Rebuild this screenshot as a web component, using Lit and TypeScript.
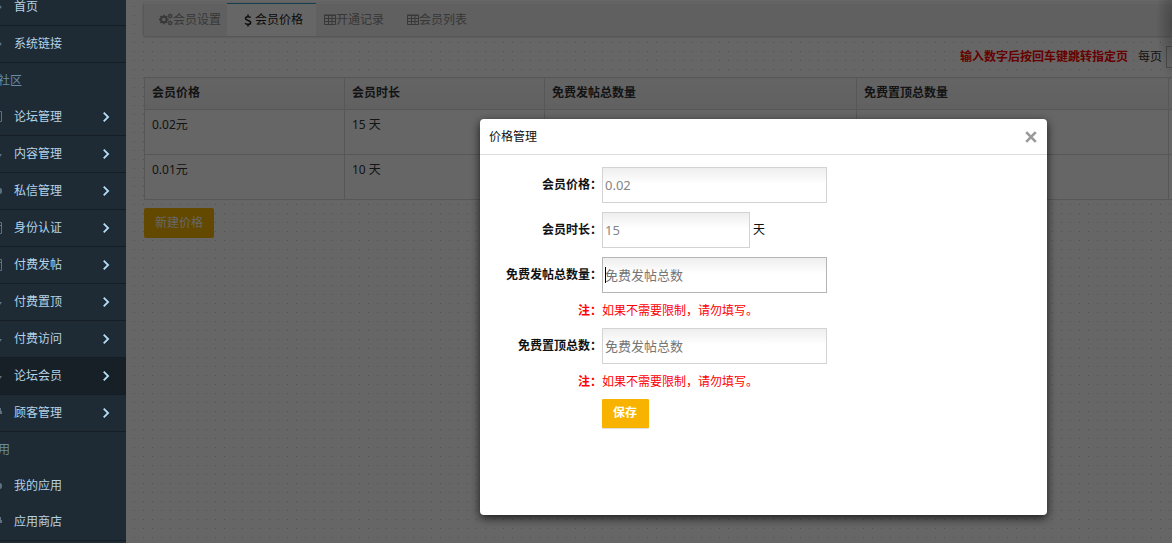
import { LitElement, html, css, svg, nothing } from "lit";
import { customElement, state } from "lit/decorators.js";

const chevron = html`<svg class="chevron" viewBox="0 0 8 12" aria-hidden="true">
  <path d="M1.700 1.700 6.100 6 1.700 10.300" fill="none" stroke="currentColor" stroke-width="1.800" />
</svg>`;

const teeth = (cx: number, cy: number, inner: number, outer: number, count: number, w: number) =>
  Array.from({ length: count }, (_, i) => svg`<rect x=${cx - w / 2} y=${cy - outer} width=${w} height=${outer - inner}
    transform=${`rotate(${(360 / count) * i} ${cx} ${cy})`} />`);

const cogs = html`<svg class="tab-icon" viewBox="0 0 14 13" aria-hidden="true" fill="currentColor">
  <circle cx="4.8" cy="6.5" r="2.8" fill="none" stroke="currentColor" stroke-width="2" />
  ${teeth(4.8, 6.5, 3.2, 4.8, 8, 1.8)}
  <circle cx="11.2" cy="3" r="1.4" fill="none" stroke="currentColor" stroke-width="1.1" />
  ${teeth(11.2, 3, 1.6, 2.5, 6, 1)}
  <circle cx="11.2" cy="10" r="1.4" fill="none" stroke="currentColor" stroke-width="1.1" />
  ${teeth(11.2, 10, 1.6, 2.5, 6, 1)}
</svg>`;

const dollar = html`<svg class="tab-icon dollar" viewBox="0 0 8 13" aria-hidden="true" fill="none" stroke="currentColor" stroke-width="1.5">
  <path d="M4 .5v2M4 10.500v2M6.700 3.500C5.500 2.600 1.500 2 1.500 4.500c0 2.500 5.200 1.300 5.200 4 0 2.500-4.200 2.200-5.600.8" />
</svg>`;

const grid = html`<svg class="tab-icon grid" viewBox="0 0 12 11" aria-hidden="true" fill="none" stroke="currentColor">
  <path d="M.5 1.500h11v9H.5zM0 1h12M.5 4.500h11M.5 7.500h11M4.500 1.500v9M8 1.500v9" />
</svg>`;

const edge: Record<string, unknown> = {
  dot: svg`<circle cx="0" cy="6" r="1.5" />`,
  box: svg`<path d="M0 .5h1.500v10H0" fill="none" stroke="currentColor" />`,
  card: svg`<path d="M0 .5h1.500v11H0M0 3.500h2" fill="none" stroke="currentColor" />`,
  arrow: svg`<path d="M0 6h2L0 9z" />`,
  bubble: svg`<path d="M0 3q2 0 2 3T0 9z" />`,
  user: svg`<path d="M0 1h1v3h1v3H0z" />`,
};

interface Entry {
  text: string;
  icon?: string;
  kind?: "plain" | "open" | "heading" | "bare";
  active?: boolean;
}

const menu: Entry[] = [
  { text: "首页", icon: "dot", kind: "plain" },
  { text: "系统链接", icon: "dot", kind: "plain" },
  { text: "社区", kind: "heading" },
  { text: "论坛管理", icon: "box", kind: "open" },
  { text: "内容管理", icon: "arrow", kind: "open" },
  { text: "私信管理", icon: "bubble", kind: "open" },
  { text: "身份认证", icon: "card", kind: "open" },
  { text: "付费发帖", icon: "card", kind: "open" },
  { text: "付费置顶", icon: "arrow", kind: "open" },
  { text: "付费访问", icon: "arrow", kind: "open" },
  { text: "论坛会员", icon: "arrow", kind: "open", active: true },
  { text: "顾客管理", icon: "user", kind: "open" },
  { text: "应用", kind: "heading" },
  { text: "我的应用", icon: "bubble", kind: "bare" },
  { text: "应用商店", icon: "user", kind: "plain" },
];

const base = css`
  :host {
    font: 12px/18px "Noto Sans", "Noto Sans CJK SC", sans-serif;
  }
  * {
    box-sizing: border-box;
  }
  a {
    color: inherit;
    text-decoration: none;
  }
  button,
  input,
  select {
    font: inherit;
    margin: 0;
  }
`;

@customElement("side-menu")
class SideMenu extends LitElement {
  static styles = [
    base,
    css`
      :host {
        display: block;
        overflow: hidden;
        background: #1e2b35;
        color: #b4d3e6;
      }
      .list {
        margin: -11px 0 0;
        padding: 0;
        list-style: none;
      }
      .link {
        display: flex;
        align-items: center;
        height: 37px;
        padding-right: 16px;
        border-bottom: 1px solid #151e25;
      }
      .bare {
        height: 36px;
        border-bottom: 0;
      }
      .active {
        background: #172027;
      }
      .heading {
        display: flex;
        align-items: center;
        justify-content: flex-end;
        width: 22px;
        height: 36px;
        white-space: nowrap;
        color: #668da3;
      }
      .short {
        width: 10px;
      }
      .edge {
        flex: none;
        width: 14px;
        height: 12px;
        color: #5d717e;
        fill: currentColor;
      }
      .label {
        flex: 1;
        white-space: nowrap;
      }
      .chevron {
        width: 8px;
        height: 12px;
        color: #b4dcf8;
      }
    `,
  ];

  render() {
    return html`<nav aria-label="主菜单">
      <ul class="list">
        ${menu.map((m) =>
          m.kind === "heading"
            ? html`<li class="heading ${m.text === "应用" ? "short" : ""}">${m.text}</li>`
            : html`<li>
                <a class="link ${m.kind} ${m.active ? "active" : ""}" href="#">
                  <svg class="edge" viewBox="0 0 14 12" aria-hidden="true">${edge[m.icon!]}</svg>
                  <span class="label">${m.text}</span>
                  ${m.kind === "open" ? chevron : nothing}
                </a>
              </li>`
        )}
      </ul>
    </nav>`;
  }
}

@customElement("price-page")
class PricePage extends LitElement {
  static styles = [
    base,
    css`
      :host {
        display: block;
        overflow: hidden;
        padding: 3px 0 0 18px;
        color: #333;
        background-color: #ccc;
        background-image: linear-gradient(90deg, transparent 1px, #fff 1px), linear-gradient(transparent 1px, #fff 1px);
        background-position: 8px 6px;
        background-size: 9px 9px;
      }
      .tabs {
        display: flex;
        align-items: flex-end;
        height: 33px;
        background: linear-gradient(#fff 0 1px, #f0f0f0 1px);
        box-shadow: 0 1px 2px #ccc, -1px 0 2px #ddd;
      }
      .tab {
        display: flex;
        align-items: center;
        height: 33px;
        padding: 0 15px 0 8px;
        color: #8c8c8c;
      }
      .first {
        padding: 0 6px 0 15px;
      }
      .current {
        padding: 0 13px 0 17px;
        background: #fff;
        border-top: 1px solid #2ea1c9;
        color: #222;
      }
      .tab-icon {
        width: 14px;
        height: 13px;
      }
      .dollar {
        width: 8px;
        margin-right: 3px;
      }
      .grid {
        width: 12px;
        height: 11px;
      }
      .pager {
        display: flex;
        justify-content: flex-end;
        align-items: center;
        height: 22px;
        margin: 10px 0 9px;
        gap: 10px;
        white-space: nowrap;
      }
      .hint {
        color: #f00;
        font-weight: bold;
      }
      .size {
        display: flex;
        align-items: center;
        gap: 4px;
        width: 34px;
      }
      .count {
        flex: none;
        width: 48px;
        height: 22px;
        border: 1px solid #bbb;
        background: #fff;
      }
      .prices {
        table-layout: fixed;
        width: calc(100% + 100px);
        border-collapse: collapse;
        background: #fff;
      }
      .narrow {
        width: 200px;
      }
      .wide {
        width: 312px;
      }
      th,
      td {
        padding: 6px 7px;
        border: 1px solid #d9d9d9;
        text-align: left;
        vertical-align: top;
      }
      th {
        height: 32px;
        background: linear-gradient(#fafafa, #f2f2f2);
      }
      td {
        height: 45px;
      }
      .create {
        height: 30px;
        margin-top: 8px;
        padding: 0 11px;
        border: 0;
        border-radius: 2px;
        background: #f8b300;
        color: #fff;
      }
    `,
  ];

  render() {
    return html`
      <nav class="tabs" aria-label="会员">
        <a class="tab first" href="#">${cogs}会员设置</a>
        <a class="tab current" href="#" aria-current="page">${dollar}会员价格</a>
        <a class="tab" href="#">${grid}开通记录</a>
        <a class="tab" href="#">${grid}会员列表</a>
      </nav>
      <div class="pager">
        <span class="hint">输入数字后按回车键跳转指定页</span>
        <label class="size">每页 <select class="count"><option></option></select></label>
      </div>
      <table class="prices">
        <colgroup>
          <col class="narrow" /><col class="narrow" /><col class="wide" /><col class="wide" /><col />
        </colgroup>
        <thead>
          <tr><th>会员价格</th><th>会员时长</th><th>免费发帖总数量</th><th>免费置顶总数量</th><th></th></tr>
        </thead>
        <tbody>
          <tr><td>0.02元</td><td>15 天</td><td></td><td></td><td></td></tr>
          <tr><td>0.01元</td><td>10 天</td><td></td><td></td><td></td></tr>
        </tbody>
      </table>
      <button class="create" type="button">新建价格</button>
    `;
  }
}

@customElement("price-dialog")
class PriceDialog extends LitElement {
  static styles = [
    base,
    css`
      :host {
        display: block;
        width: 567px;
        min-height: 396px;
        border-radius: 4px;
        background: #fff;
        color: #111;
        box-shadow: 0 3px 10px rgba(0, 0, 0, 0.75);
      }
      .head {
        display: flex;
        align-items: center;
        justify-content: space-between;
        height: 36px;
        padding: 0 10px 0 9px;
        border-bottom: 1px solid #ddd;
      }
      .title {
        margin: 0;
        font: inherit;
      }
      .close {
        display: flex;
        padding: 0;
        border: 0;
        background: none;
        color: #999;
      }
      .cross {
        width: 12px;
        height: 12px;
      }
      .form {
        display: grid;
        grid-template-columns: 122px 1fr;
        row-gap: 9px;
        align-items: center;
        padding: 12px 0;
      }
      .name {
        text-align: right;
        font-weight: bold;
        white-space: nowrap;
      }
      .field {
        position: relative;
        display: flex;
        align-items: center;
        gap: 3px;
      }
      .box {
        width: 225px;
        height: 36px;
        padding: 0 2px;
        border: 1px solid #d3d3d3;
        border-radius: 0;
        outline: 0;
        background: linear-gradient(#eee, #fff 16px);
        color: #858585;
        font-size: 13px;
      }
      .box::placeholder {
        color: #757575;
        opacity: 1;
      }
      .days {
        width: 148px;
      }
      .editing {
        border-color: #b5b5b5;
      }
      .caret {
        position: absolute;
        left: 3px;
        top: 10px;
        width: 1px;
        height: 16px;
        background: #000;
      }
      .note {
        line-height: 17px;
        color: #f00;
      }
      .save {
        grid-column: 2;
        justify-self: start;
        height: 29px;
        padding: 0 12px 2px 11px;
        border: 0;
        border-radius: 1px;
        background: #f8b300;
        color: #fff;
        font-weight: bold;
        box-shadow: 0 1px 1px #ddd;
      }
    `,
  ];

  @state() private price = "0.02";
  @state() private days = "15";

  render() {
    return html`
      <header class="head">
        <h2 class="title">价格管理</h2>
        <button class="close" type="button" aria-label="关闭">
          <svg class="cross" viewBox="0 0 12 12" aria-hidden="true">
            <path d="M1.200 1.200l9.600 9.600M10.800 1.200l-9.600 9.600" stroke="currentColor" stroke-width="2.600" />
          </svg>
        </button>
      </header>
      <form class="form">
        <label class="name" for="price">会员价格：</label>
        <div class="field"><input class="box" id="price" .value=${this.price} /></div>
        <label class="name" for="days">会员时长：</label>
        <div class="field"><input class="box days" id="days" .value=${this.days} /><span>天</span></div>
        <label class="name" for="posts">免费发帖总数量：</label>
        <div class="field"><input class="box editing" id="posts" placeholder="免费发帖总数" /><i class="caret"></i></div>
        <span class="name note">注：</span><span class="note">如果不需要限制，请勿填写。</span>
        <label class="name" for="tops">免费置顶总数：</label>
        <div class="field"><input class="box" id="tops" placeholder="免费发帖总数" /></div>
        <span class="name note">注：</span><span class="note">如果不需要限制，请勿填写。</span>
        <button class="save" type="button">保存</button>
      </form>
    `;
  }
}

@customElement("app-root")
class AppRoot extends LitElement {
  static styles = [
    base,
    css`
      :host {
        display: grid;
        grid-template-columns: 126px minmax(0, 1fr);
        height: 100vh;
        overflow: hidden;
      }
      .content {
        position: relative;
        display: grid;
        min-width: 0;
      }
      .shade {
        position: absolute;
        inset: 0;
        background: radial-gradient(ellipse 16px 60px at 100% 24px, rgba(0, 0, 0, 0.25), transparent) rgba(0, 0, 0, 0.6);
      }
      .dialog {
        position: absolute;
        top: 119px;
        right: 125px;
      }
    `,
  ];

  render() {
    return html`
      <side-menu></side-menu>
      <main class="content">
        <price-page></price-page>
        <div class="shade"></div>
        <price-dialog class="dialog" role="dialog" aria-label="价格管理"></price-dialog>
      </main>
    `;
  }
}
